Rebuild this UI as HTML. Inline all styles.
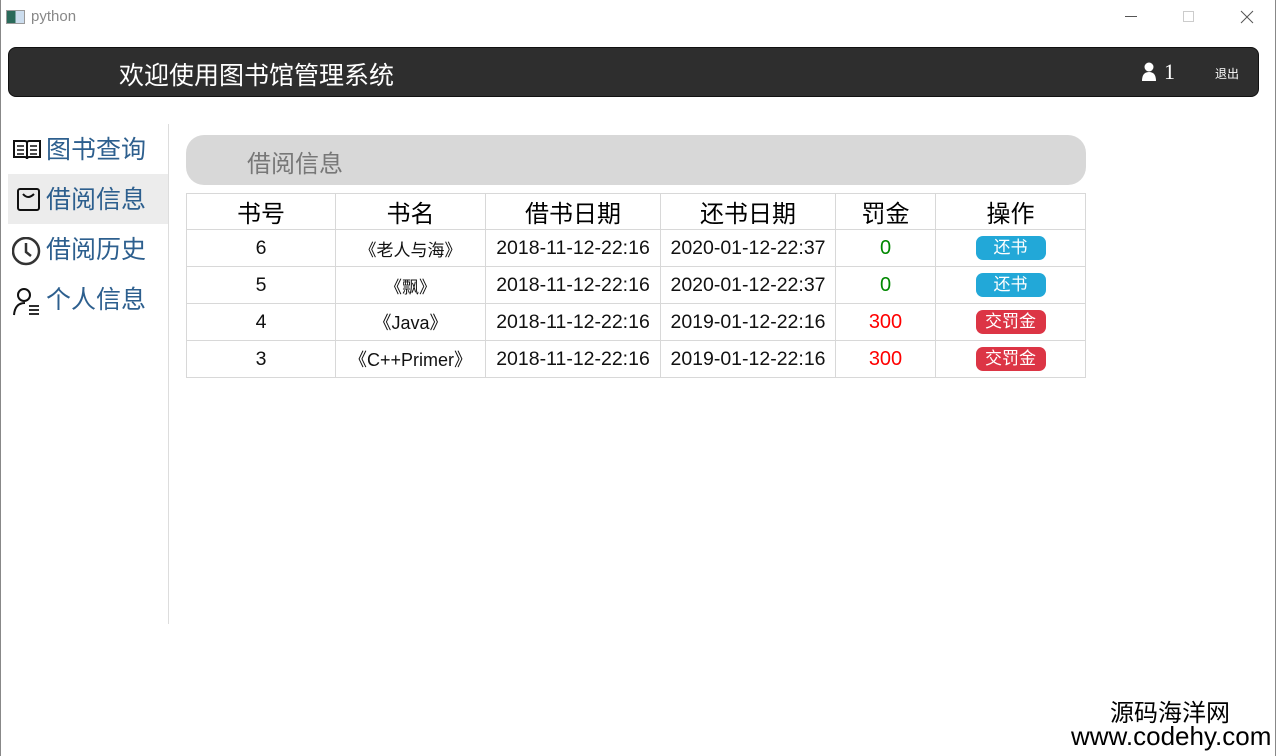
<!DOCTYPE html>
<html><head><meta charset="utf-8"><style>
*{margin:0;padding:0;box-sizing:border-box}
body{width:1276px;height:756px;background:#fff;position:relative;overflow:hidden;font-family:"Liberation Sans","Noto Sans CJK SC",sans-serif}
.a{position:absolute}
.hdr{left:8px;top:47px;width:1251px;height:50px;background:#2e2e2e;border:1px solid #111;border-radius:8px}
.nav{left:8px;width:160px;height:50px;font-size:25px;color:#2d5f8e;line-height:50px}
.nav span{position:absolute;left:38px}
.nav svg{position:absolute;left:4px;top:12px}
table{border-collapse:collapse;position:absolute;left:186px;top:193px;width:900px}
td{border:1px solid #d8d8d8;text-align:center;font-size:19.5px;height:37px;color:#111}
tr:first-child td{font-size:24px;height:36px;color:#000}
.b{display:inline-block;width:70px;height:24px;line-height:24px;border-radius:7px;color:#fff;font-size:17px}
</style></head><body>
<div class="a" style="left:0;top:0;width:1px;height:756px;background:#888"></div>
<div class="a" style="right:0;top:0;width:1px;height:756px;background:#888"></div>
<div class="a" style="left:6px;top:10px;width:19px;height:14px;border:1px solid #999;background:linear-gradient(90deg,#2a6a5a 0 50%,#cde 50%)"></div>
<div class="a" style="left:31px;top:8px;font-size:15px;color:#888">python</div>
<div class="a" style="left:1125px;top:16px;width:12px;border-top:1px solid #555"></div>
<div class="a" style="left:1183px;top:11px;width:11px;height:11px;border:1px solid #ccc"></div>
<svg class="a" style="left:1240px;top:10px" width="14" height="14"><path d="M1 1L13 13M13 1L1 13" stroke="#555" stroke-width="1"/></svg>
<div class="a hdr"></div>
<div class="a" style="left:119px;top:56px;font-size:25px;color:#fff">欢迎使用图书馆管理系统</div>
<svg class="a" style="left:1142px;top:62px" width="14" height="20"><circle cx="7" cy="5" r="4.5" fill="#fff"/><path d="M0 19 Q0 10 7 10 Q14 10 14 19Z" fill="#fff"/></svg>
<div class="a" style="left:1164px;top:59px;font-size:22px;color:#fff;font-family:'Liberation Serif',serif">1</div>
<div class="a" style="left:1215px;top:65px;font-size:12px;color:#fff">退出</div>
<div class="a" style="left:168px;top:124px;width:1px;height:500px;background:#ddd"></div>
<div class="a" style="left:8px;top:174px;width:160px;height:50px;background:#ececec"></div>
<div class="a nav" style="top:125px"><svg width="30" height="26"><path d="M2 4h11q2 0 2 2v16q0-2-2-2H2zM28 4H17q-2 0-2 2v16q0-2 2-2h11z" fill="none" stroke="#111" stroke-width="2"/><path d="M5 9h7M5 13h7M5 17h7M18 9h7M18 13h7M18 17h7" stroke="#111" stroke-width="1.5"/></svg><span>图书查询</span></div>
<div class="a nav" style="top:175px"><svg width="30" height="26"><rect x="6" y="2" width="21" height="21" rx="2" fill="none" stroke="#111" stroke-width="2"/><path d="M11 7q5 6 11 0" fill="none" stroke="#111" stroke-width="2"/></svg><span>借阅信息</span></div>
<div class="a nav" style="top:225px"><svg width="30" height="30"><circle cx="14" cy="14" r="13" fill="none" stroke="#333" stroke-width="2.5"/><path d="M14 6v9l5 4" fill="none" stroke="#333" stroke-width="2.5"/></svg><span>借阅历史</span></div>
<div class="a nav" style="top:275px"><svg width="34" height="30"><circle cx="12" cy="8" r="6" fill="none" stroke="#111" stroke-width="2"/><path d="M2 28q1-12 11-12" fill="none" stroke="#111" stroke-width="2"/><path d="M17 19h10M17 23h10M17 27h10" stroke="#111" stroke-width="1.8"/></svg><span>个人信息</span></div>
<div class="a" style="left:186px;top:135px;width:900px;height:50px;background:#d8d8d8;border-radius:18px"></div>
<div class="a" style="left:247px;top:144px;font-size:24px;color:#777">借阅信息</div>
<table>
<tr><td style="width:149px">书号</td><td style="width:150px">书名</td><td style="width:175px">借书日期</td><td style="width:175px">还书日期</td><td style="width:100px">罚金</td><td>操作</td></tr>
<tr><td>6</td><td style="font-size:17px">《老人与海》</td><td>2018-11-12-22:16</td><td>2020-01-12-22:37</td><td style="color:#080;font-size:20px">0</td><td><span class="b" style="background:#22a8d8">还书</span></td></tr>
<tr><td>5</td><td style="font-size:17px">《飘》</td><td>2018-11-12-22:16</td><td>2020-01-12-22:37</td><td style="color:#080;font-size:20px">0</td><td><span class="b" style="background:#22a8d8">还书</span></td></tr>
<tr><td>4</td><td style="font-size:18px">《Java》</td><td>2018-11-12-22:16</td><td>2019-01-12-22:16</td><td style="color:#f00;font-size:20px">300</td><td><span class="b" style="background:#dc3545">交罚金</span></td></tr>
<tr><td>3</td><td style="font-size:18px">《C++Primer》</td><td>2018-11-12-22:16</td><td>2019-01-12-22:16</td><td style="color:#f00;font-size:20px">300</td><td><span class="b" style="background:#dc3545">交罚金</span></td></tr>
</table>
<div class="a" style="left:1110px;top:700px;font-size:24px;color:#000;line-height:28px">源码海洋网</div>
<div class="a" style="left:1071px;top:722px;font-size:26px;color:#000;line-height:28px">www.codehy.com</div>
</body></html>
